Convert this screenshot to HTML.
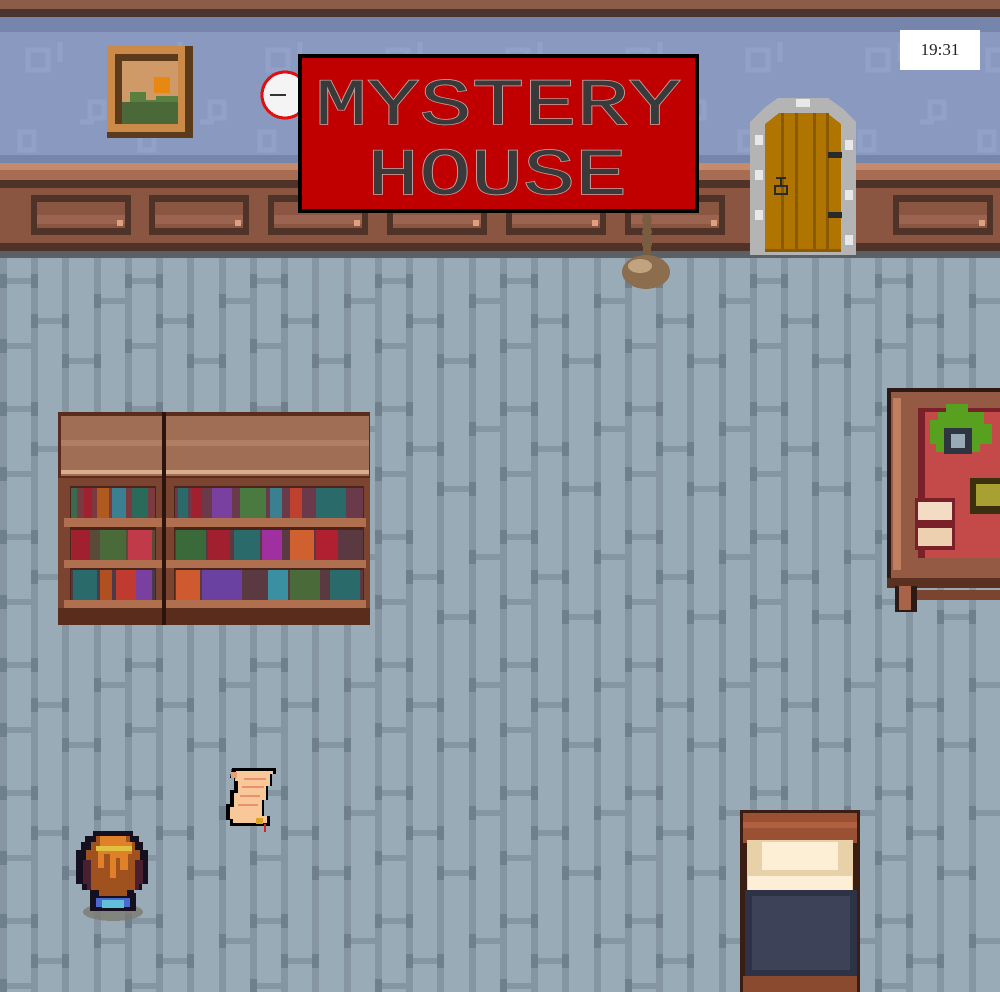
<!DOCTYPE html>
<html><head><meta charset="utf-8"><style>
html,body{margin:0;padding:0;width:1000px;height:992px;overflow:hidden;background:#9aabb8}
svg{display:block;position:absolute;left:0;top:0}
.clk{position:absolute;left:900px;top:30px;width:80px;height:40px;background:#fff;font-family:"Liberation Serif",serif;font-size:17px;line-height:40px;text-align:center;color:#222}
</style></head><body>
<svg width="1000" height="992" viewBox="0 0 1000 992" shape-rendering="crispEdges">
<defs>
<pattern id="fl" x="0" y="258" width="125" height="128" patternUnits="userSpaceOnUse">
<rect width="125" height="128" fill="#9aabb8"/>
<rect x="0" y="0" width="7" height="128" fill="#8595a1"/>
<rect x="31" y="0" width="7" height="128" fill="#8595a1"/>
<rect x="62" y="0" width="7" height="128" fill="#8595a1"/>
<rect x="94" y="0" width="7" height="128" fill="#8595a1"/>
<rect x="7" y="20" width="24" height="6" fill="#8595a1"/><rect x="0" y="16" width="7" height="14" fill="#6f7f8b"/><rect x="31" y="16" width="7" height="14" fill="#6f7f8b"/>
<rect x="38" y="60" width="24" height="6" fill="#8595a1"/><rect x="31" y="56" width="7" height="14" fill="#6f7f8b"/><rect x="62" y="56" width="7" height="14" fill="#6f7f8b"/>
<rect x="69" y="100" width="25" height="6" fill="#8595a1"/><rect x="62" y="96" width="7" height="14" fill="#6f7f8b"/><rect x="94" y="96" width="7" height="14" fill="#6f7f8b"/>
<rect x="101" y="40" width="24" height="6" fill="#8595a1"/><rect x="94" y="36" width="7" height="14" fill="#6f7f8b"/>
<rect x="7" y="85" width="24" height="6" fill="#8595a1"/><rect x="0" y="81" width="7" height="14" fill="#6f7f8b"/>
</pattern>
<pattern id="wp" x="0" y="32" width="120" height="130" patternUnits="userSpaceOnUse">
<g fill="none" stroke="#91a1c7" stroke-width="5">
<path d="M28 18h20v20h-20zM60 10v20"/>
<path d="M90 70h14v16h-14zM80 90h14"/>
<path d="M20 100h14v18h-14z"/>
</g>
</pattern>
</defs>
<rect x="0" y="258" width="1000" height="734" fill="url(#fl)"/>
<rect x="0" y="0" width="1000" height="9" fill="#8c5c48"/>
<rect x="0" y="9" width="1000" height="8" fill="#4b3530"/>
<rect x="0" y="17" width="1000" height="146" fill="#8999bf"/>
<rect x="0" y="17" width="1000" height="15" fill="#7585ab"/>
<rect x="0" y="32" width="1000" height="128" fill="url(#wp)"/>
<rect x="0" y="155" width="1000" height="8" fill="#7585ab"/>
<rect x="0" y="163" width="1000" height="88" fill="#8a5642"/>
<rect x="0" y="163" width="1000" height="7" fill="#c68a6c"/>
<rect x="0" y="170" width="1000" height="10" fill="#a86c52"/>
<rect x="0" y="180" width="1000" height="8" fill="#4f3328"/>
<rect x="0" y="243" width="1000" height="8" fill="#4f3328"/>
<rect x="0" y="251" width="1000" height="7" fill="#5b5f66"/>
<g>
<g id="pn"><rect x="31" y="195" width="100" height="40" fill="#4f3328"/><rect x="37" y="202" width="88" height="26" fill="#8a5642"/><rect x="37" y="215" width="88" height="9" fill="#9a6450"/><rect x="117" y="220" width="6" height="6" fill="#e0a080"/></g>
<use href="#pn" x="118"/><use href="#pn" x="237"/><use href="#pn" x="356"/><use href="#pn" x="475"/><use href="#pn" x="594"/><use href="#pn" x="862"/>
</g>
<rect x="107" y="46" width="86" height="92" fill="#cc8a48"/>
<rect x="185" y="46" width="8" height="92" fill="#5c3a1c"/>
<rect x="107" y="132" width="86" height="6" fill="#5c3a1c"/>
<rect x="115" y="54" width="63" height="70" fill="#5c3a1c"/>
<rect x="122" y="61" width="56" height="63" fill="#d09a68"/>
<rect x="154" y="77" width="16" height="16" fill="#e88810"/>
<rect x="122" y="102" width="56" height="22" fill="#4a6838"/>
<path d="M130 102v-10h16v8h10v-4h22v6z" fill="#5a8040"/>
<circle cx="285" cy="95" r="23" fill="#f4f4f4" stroke="#e01010" stroke-width="3"/>
<rect x="270" y="94" width="16" height="2" fill="#333"/>
<path d="M750 255V122l14-14 14-10h50l14 10 14 14v133z" fill="#b4b4b4"/>
<path d="M765 252V124l14-11h48l14 11v128z" fill="#b07400"/>
<g fill="#8a5a00"><rect x="781" y="113" width="3" height="139"/><rect x="795" y="113" width="3" height="139"/><rect x="813" y="113" width="3" height="139"/><rect x="826" y="113" width="3" height="139"/><rect x="765" y="249" width="76" height="3"/></g>
<g fill="#2a2a2a"><rect x="828" y="152" width="14" height="6"/><rect x="828" y="212" width="14" height="6"/><rect x="776" y="177" width="10" height="2"/><rect x="780" y="179" width="2" height="6"/><rect x="774" y="185" width="14" height="2"/><rect x="774" y="193" width="14" height="2"/><rect x="774" y="185" width="2" height="10"/><rect x="786" y="185" width="2" height="10"/></g>
<g fill="#e8e8e8"><rect x="755" y="135" width="8" height="10"/><rect x="755" y="170" width="8" height="10"/><rect x="755" y="210" width="8" height="10"/><rect x="845" y="140" width="8" height="10"/><rect x="845" y="190" width="8" height="10"/><rect x="845" y="235" width="8" height="10"/><rect x="796" y="99" width="14" height="8"/></g>
<g fill="#7a5c40"><rect x="643" y="212" width="8" height="50"/><circle cx="647" cy="220" r="5"/><circle cx="647" cy="232" r="5"/><circle cx="647" cy="244" r="5"/></g>
<ellipse cx="646" cy="272" rx="24" ry="17" fill="#8c6e4e"/>
<ellipse cx="640" cy="266" rx="12" ry="7" fill="#c0a480"/>
<rect x="298" y="54" width="401" height="159" fill="#000"/>
<rect x="302" y="58" width="393" height="151" fill="#c00000"/>
<g font-family="'Liberation Mono',monospace" fill="#3a3a3a" stroke="#c8a8a8" stroke-width="1.5" text-anchor="middle" paint-order="stroke">
<text x="498" y="0" font-size="72" transform="translate(0,124) scale(1,0.92)" textLength="366" lengthAdjust="spacingAndGlyphs">MYSTERY</text>
<text x="497" y="0" font-size="72" transform="translate(0,194) scale(1,0.92)" textLength="260" lengthAdjust="spacingAndGlyphs">HOUSE</text>
</g>
<rect x="58" y="412" width="312" height="213" fill="#5a2c1c"/>
<rect x="61" y="416" width="101" height="60" fill="#a06e54"/>
<rect x="166" y="416" width="203" height="60" fill="#a06e54"/>
<rect x="61" y="440" width="101" height="6" fill="#b07e62"/><rect x="166" y="440" width="203" height="6" fill="#b07e62"/>
<rect x="61" y="470" width="101" height="4" fill="#d8b090"/><rect x="166" y="470" width="203" height="4" fill="#d8b090"/>
<rect x="58" y="478" width="312" height="130" fill="#7a4430"/>
<rect x="70" y="486" width="86" height="116" fill="#4a2418"/>
<rect x="174" y="486" width="190" height="116" fill="#4a2418"/>
<g>
<rect x="71" y="488" width="84" height="30" fill="#7a3a40"/>
<rect x="71" y="488" width="6" height="30" fill="#3a6a50"/><rect x="84" y="488" width="8" height="30" fill="#a02030"/><rect x="97" y="488" width="12" height="30" fill="#b05a20"/><rect x="112" y="488" width="14" height="30" fill="#3a8090"/><rect x="132" y="488" width="16" height="30" fill="#2a6a5a"/>
<rect x="175" y="488" width="188" height="30" fill="#6a3a4a"/>
<rect x="178" y="488" width="10" height="30" fill="#2a6a6a"/><rect x="192" y="488" width="10" height="30" fill="#a02030"/><rect x="212" y="488" width="20" height="30" fill="#7a40a0"/><rect x="240" y="488" width="26" height="30" fill="#4a7a40"/><rect x="270" y="488" width="12" height="30" fill="#3a8090"/><rect x="290" y="488" width="12" height="30" fill="#c04030"/><rect x="316" y="488" width="30" height="30" fill="#2a6a6a"/>
<rect x="71" y="530" width="84" height="30" fill="#5a4a3a"/>
<rect x="72" y="530" width="18" height="30" fill="#a02030"/><rect x="100" y="530" width="26" height="30" fill="#4a6a3a"/><rect x="128" y="530" width="24" height="30" fill="#c03a4a"/>
<rect x="175" y="530" width="188" height="30" fill="#5a3a40"/>
<rect x="176" y="530" width="30" height="30" fill="#3a6a3a"/><rect x="208" y="530" width="22" height="30" fill="#a02030"/><rect x="234" y="530" width="26" height="30" fill="#2a6a6a"/><rect x="262" y="530" width="20" height="30" fill="#a030a0"/><rect x="290" y="530" width="24" height="30" fill="#d06030"/><rect x="316" y="530" width="22" height="30" fill="#b02030"/>
<rect x="71" y="570" width="84" height="30" fill="#4a3a4a"/>
<rect x="73" y="570" width="24" height="30" fill="#2a6a6a"/><rect x="100" y="570" width="12" height="30" fill="#b05020"/><rect x="116" y="570" width="20" height="30" fill="#c03a30"/><rect x="136" y="570" width="16" height="30" fill="#7a40a0"/>
<rect x="175" y="570" width="188" height="30" fill="#5a3a40"/>
<rect x="176" y="570" width="24" height="30" fill="#d05a30"/><rect x="202" y="570" width="40" height="30" fill="#6a40a0"/><rect x="268" y="570" width="20" height="30" fill="#3a90a0"/><rect x="290" y="570" width="30" height="30" fill="#4a6a3a"/><rect x="330" y="570" width="30" height="30" fill="#2a6a6a"/>
</g>
<g fill="#b07050"><rect x="64" y="518" width="302" height="9"/><rect x="64" y="560" width="302" height="8"/><rect x="64" y="600" width="302" height="8"/></g>
<rect x="162" y="412" width="4" height="213" fill="#2a140c"/>
<rect x="887" y="388" width="113" height="196" fill="#2e1a14"/>
<rect x="891" y="392" width="109" height="186" fill="#945a44"/>
<rect x="893" y="398" width="8" height="172" fill="#c08060"/>
<rect x="918" y="408" width="82" height="150" fill="#7a2028"/>
<rect x="925" y="412" width="75" height="146" fill="#c44a4a"/>
<rect x="915" y="498" width="40" height="52" fill="#7a2028"/>
<rect x="918" y="502" width="34" height="18" fill="#f4dcc4"/><rect x="918" y="528" width="34" height="18" fill="#ecd0b0"/>
<rect x="970" y="478" width="30" height="36" fill="#3a3010"/><rect x="976" y="484" width="24" height="22" fill="#a8a030"/>
<path d="M930 420h8v-8h8v-8h22v8h16v12h8v20h-12v8h-44v-8h-6z" fill="#58a020"/>
<rect x="944" y="428" width="28" height="26" fill="#2e3440"/><rect x="951" y="434" width="14" height="14" fill="#9aabb8"/>
<rect x="887" y="578" width="113" height="10" fill="#5a3020"/>
<rect x="895" y="586" width="22" height="26" fill="#2e1a14"/><rect x="899" y="586" width="12" height="24" fill="#a86448"/>
<rect x="917" y="590" width="83" height="10" fill="#7a4430"/>
<rect x="740" y="810" width="120" height="182" fill="#3a1e14"/>
<rect x="743" y="813" width="114" height="30" fill="#9a5032"/>
<rect x="743" y="822" width="114" height="6" fill="#b06040"/>
<rect x="747" y="840" width="106" height="52" fill="#e8d0a8"/>
<rect x="762" y="842" width="76" height="28" fill="#fcefd6"/>
<rect x="748" y="876" width="104" height="16" fill="#fcefd6"/>
<rect x="745" y="890" width="112" height="88" fill="#2e3246"/>
<rect x="752" y="896" width="98" height="74" fill="#3e4258"/>
<rect x="743" y="976" width="114" height="16" fill="#8a4a30"/>
<ellipse cx="113" cy="912" rx="30" ry="9" fill="#7a7a70" opacity=".8"/>
<rect x="90" y="893" width="46" height="18" fill="#141020"/>
<rect x="96" y="893" width="34" height="14" fill="#4a6ad0"/>
<rect x="102" y="900" width="22" height="8" fill="#60c0d8"/>
<path d="M93 831h40v5h6v6h4v8h5v34h-6v6h-8v8h-44v-8h-8v-6h-6v-34h5v-8h4v-6h8z" fill="#141020"/>
<path d="M96 836h34v6h5v8h5v34h-5v6h-8v6h-28v-6h-8v-6h-5v-34h5v-8h5z" fill="#a0521e"/>
<path d="M100 836h26v6h6v12h-4v16h-8v-12h-4v20h-6v-24h-6v14h-6v-20h2z" fill="#e08028"/>
<rect x="96" y="846" width="36" height="5" fill="#e0c040"/>
<path d="M83 860h8v30h-4v-6h-4zM139 860h4v24h-4v6h-4v-30z" fill="#4a2030"/>
<path d="M232 768h44v6h-4v12h-4v14h-4v16h6v10h-40v-6h-4v-16h4v-14h4v-12h-4z" fill="#000"/>
<path d="M236 771h37v3h-3v12h-4v14h-4v16h5v7h-34v-4h-3v-12h4v-14h4v-12h-3z" fill="#f8c898"/>
<g fill="#e89070"><rect x="244" y="778" width="22" height="2"/><rect x="242" y="786" width="22" height="2"/><rect x="240" y="795" width="20" height="2"/><rect x="238" y="804" width="20" height="2"/></g>
<rect x="256" y="818" width="7" height="6" fill="#e0a020"/>
<rect x="264" y="824" width="2" height="8" fill="#e02020"/>
<rect x="231" y="772" width="6" height="6" fill="#e8a070"/>
</svg>
<div class="clk">19:31</div>
</body></html>
